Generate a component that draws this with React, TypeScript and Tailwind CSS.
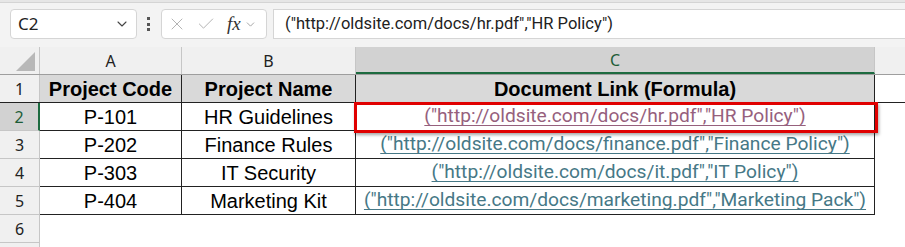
import { Check, ChevronDown, X } from 'lucide-react';

const rows = [
  { code: 'P-101', name: 'HR Guidelines', link: '("http://oldsite.com/docs/hr.pdf","HR Policy")', visited: true },
  { code: 'P-202', name: 'Finance Rules', link: '("http://oldsite.com/docs/finance.pdf","Finance Policy")' },
  { code: 'P-303', name: 'IT Security', link: '("http://oldsite.com/docs/it.pdf","IT Policy")' },
  { code: 'P-404', name: 'Marketing Kit', link: '("http://oldsite.com/docs/marketing.pdf","Marketing Pack")' },
];

const headFont = { fontFamily: '"Noto Sans", "Open Sans", sans-serif' };
const linkFont = { fontFamily: 'Roboto, "Noto Sans", sans-serif' };

export default function App() {
  return (
    <div className="h-[247px] w-[905px] overflow-hidden bg-white" style={{ fontFamily: '"Liberation Sans", Arial, sans-serif' }}>
      {/* formula bar */}
      <div className="h-[3px] border-b border-[#d4d4d4] bg-[#e6e6e6]" />
      <div className="flex h-[44px] items-start bg-[#f3f3f3] pt-[6px]">
        <div className="ml-[10px] flex h-[30px] w-[127px] items-center justify-between rounded-[4px] border border-[#d5d5d5] bg-white pl-[7px] pr-[6px]">
          <span className="text-[17px] text-[#222]" style={headFont}>C2</span>
          <ChevronDown className="h-[16px] w-[16px] text-[#444]" strokeWidth={1.6} />
        </div>
        <div className="ml-[10px] mr-[11px] flex h-[30px] flex-col items-center justify-center gap-[2.5px]">
          <span className="h-[3px] w-[3px] bg-[#555]" />
          <span className="h-[3px] w-[3px] bg-[#555]" />
          <span className="h-[3px] w-[3px] bg-[#555]" />
        </div>
        <div className="flex h-[30px] w-[106px] items-center rounded-[4px] border border-[#d5d5d5] bg-white pl-[5px]">
          <X className="h-[20px] w-[20px] text-[#b4b4b4]" strokeWidth={1.2} />
          <Check className="ml-[9px] h-[20px] w-[20px] text-[#b4b4b4]" strokeWidth={1.2} />
          <span className="ml-[11px] text-[19px] italic text-[#333]" style={{ fontFamily: '"Liberation Serif", serif' }}>fx</span>
          <ChevronDown className="ml-[3px] h-[13px] w-[13px] text-[#999]" strokeWidth={1.6} />
        </div>
        <div className="ml-[6px] flex h-[30px] flex-1 items-center border border-r-0 border-[#d5d5d5] bg-white pl-[11px]">
          <span className="whitespace-nowrap text-[16.5px] text-[#222]" style={linkFont}>("http://oldsite.com/docs/hr.pdf","HR Policy")</span>
        </div>
      </div>

      {/* sheet */}
      <div className="relative">
        <div className="flex h-[28px] border-b border-[#9e9e9e] bg-[#f0f0f0] text-[16px] text-[#222]" style={headFont}>
          <div className="relative w-[40px] border-r border-[#c6c6c6]">
            <div className="absolute bottom-[3px] right-[4px] h-0 w-0 border-b-[19px] border-l-[19px] border-b-[#b8b8b8] border-l-transparent" />
          </div>
          <div className="flex w-[142px] items-center justify-center border-r border-[#c6c6c6]">A</div>
          <div className="flex w-[174px] items-center justify-center border-r border-[#c6c6c6]">B</div>
          <div className="flex w-[519px] items-center justify-center border-b-2 border-r border-b-[#1d6b40] border-r-[#c6c6c6] bg-[#d2d2d2] text-[#1d5d38]">C</div>
          <div className="flex-1" />
        </div>

        <div className="flex h-[28px] border-b border-[#222]">
          <div className="flex w-[40px] items-center justify-center border-r border-[#c6c6c6] bg-[#f0f0f0] text-[16px] text-[#222]" style={headFont}>1</div>
          <div className="flex w-[142px] items-center justify-center border-r border-[#222] bg-[#d9d9d9] text-[20px] font-bold text-black">Project Code</div>
          <div className="flex w-[174px] items-center justify-center border-r border-[#222] bg-[#d9d9d9] text-[20px] font-bold text-black">Project Name</div>
          <div className="flex w-[519px] items-center justify-center border-r border-[#222] bg-[#d9d9d9] text-[20px] font-bold text-black">Document Link (Formula)</div>
          <div className="flex-1 bg-white" />
        </div>

        {rows.map((r, i) => (
          <div key={r.code} className="flex h-[28px]">
            <div
              className={
                r.visited
                  ? 'flex w-[40px] items-center justify-center border-b border-r-2 border-b-[#c6c6c6] border-r-[#1d6b40] bg-[#d2d2d2] text-[16px] text-[#1d5d38]'
                  : 'flex w-[40px] items-center justify-center border-b border-r border-[#c6c6c6] bg-[#f0f0f0] text-[16px] text-[#222]'
              }
              style={headFont}
            >
              {i + 2}
            </div>
            <div className="flex w-[142px] items-center justify-center border-b border-r border-[#222] text-[20px] text-black">{r.code}</div>
            <div className="flex w-[174px] items-center justify-center border-b border-r border-[#222] text-[20px] text-black">{r.name}</div>
            <div className="flex w-[519px] items-center justify-center border-b border-r border-[#222]">
              <span
                className={
                  r.visited
                    ? 'whitespace-nowrap text-[19.2px] text-[#96607d] underline underline-offset-[3px] [text-decoration-skip-ink:none]'
                    : 'whitespace-nowrap text-[19.2px] text-[#467886] underline underline-offset-[3px] [text-decoration-skip-ink:none]'
                }
                style={linkFont}
              >
                {r.link}
              </span>
            </div>
            <div className="flex-1" />
          </div>
        ))}

        <div className="flex h-[28px]">
          <div className="flex w-[40px] items-center justify-center border-b border-r border-[#c6c6c6] bg-[#f0f0f0] text-[16px] text-[#222]" style={headFont}>6</div>
          <div className="flex-1" />
        </div>
        <div className="flex h-[28px]">
          <div className="w-[40px] border-r border-[#c6c6c6] bg-[#f0f0f0]" />
        </div>

        <div className="absolute left-[354px] top-[55px] h-[31px] w-[524px] border-[3px] border-[#e00000] shadow-[1px_2px_3px_rgba(0,0,0,0.35)]" />
      </div>
    </div>
  );
}
